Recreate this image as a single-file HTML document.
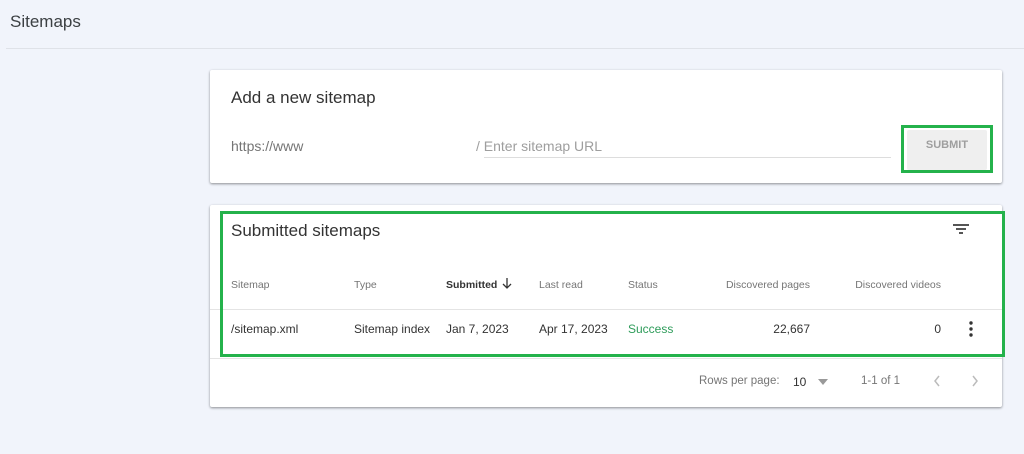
<!DOCTYPE html>
<html><head><meta charset="utf-8"><style>
*{margin:0;padding:0;box-sizing:border-box}
body{width:1024px;height:454px;background:#f1f4fb;font-family:"Liberation Sans",Arial,sans-serif;position:relative;overflow:hidden;color:#202124}
.a{position:absolute;white-space:nowrap}
.card{position:absolute;background:#fff;box-shadow:0 1px 2px rgba(0,0,0,.3),0 1px 3px rgba(0,0,0,.15);border-radius:2px}
.h{font-size:10.5px;color:#757575;top:279px}
.r{font-size:12px;color:#333;top:322px}
.g{position:absolute;border:3px solid #24b24b}
</style></head><body>
<div class="a" style="left:10px;top:12px;font-size:17px;color:#3c4043">Sitemaps</div>
<div class="a" style="left:6px;top:48px;width:1018px;height:1px;background:#dfe2e8"></div>

<div class="card" style="left:210px;top:70px;width:792px;height:113px"></div>
<div class="a" style="left:231px;top:88px;font-size:17px;color:#333">Add a new sitemap</div>
<div class="a" style="left:231px;top:138px;font-size:14px;color:#757575">https://www</div>
<div class="a" style="left:476px;top:138px;font-size:14px;color:#9e9e9e">/ Enter sitemap URL</div>
<div class="a" style="left:484px;top:157px;width:407px;height:1px;background:#ddd"></div>
<div class="a" style="left:907px;top:130px;width:80px;height:40px;background:#efefef;border-radius:2px"></div>
<div class="a" style="left:907px;top:139px;width:80px;text-align:center;font-size:11px;font-weight:bold;color:#9e9e9e">SUBMIT</div>
<div class="g" style="left:901px;top:125px;width:92px;height:48px"></div>

<div class="card" style="left:210px;top:205px;width:792px;height:202px"></div>
<div class="a" style="left:231px;top:221px;font-size:17px;color:#333">Submitted sitemaps</div>
<svg class="a" style="left:951px;top:222px" width="20" height="14"><path d="M2 3h16M5 7h10M8 11h4" stroke="#555" stroke-width="2"/></svg>
<div class="a h" style="left:231px">Sitemap</div>
<div class="a h" style="left:354px">Type</div>
<div class="a h" style="left:446px;color:#333;font-weight:bold">Submitted</div>
<svg class="a" style="left:501px;top:277px" width="12" height="13"><path d="M6 1v10M2 7l4 4 4-4" stroke="#333" stroke-width="1.3" fill="none"/></svg>
<div class="a h" style="left:539px">Last read</div>
<div class="a h" style="left:628px">Status</div>
<div class="a h" style="right:214px">Discovered pages</div>
<div class="a h" style="right:83px">Discovered videos</div>
<div class="a" style="left:210px;top:309px;width:792px;height:1px;background:#e4e4e4"></div>
<div class="a r" style="left:231px">/sitemap.xml</div>
<div class="a r" style="left:354px">Sitemap index</div>
<div class="a r" style="left:446px">Jan 7, 2023</div>
<div class="a r" style="left:539px">Apr 17, 2023</div>
<div class="a r" style="left:628px;color:#2e9c5a">Success</div>
<div class="a r" style="right:214px">22,667</div>
<div class="a r" style="right:83px">0</div>
<svg class="a" style="left:968px;top:321px" width="6" height="16"><circle cx="3" cy="2" r="1.7" fill="#333"/><circle cx="3" cy="8" r="1.7" fill="#333"/><circle cx="3" cy="14" r="1.7" fill="#333"/></svg>
<div class="a" style="left:210px;top:358px;width:792px;height:1px;background:#e4e4e4"></div>
<div class="g" style="left:220px;top:211px;width:785px;height:146px"></div>
<div class="a" style="left:699px;top:375px;font-size:11.5px;color:#757575">Rows per page:</div>
<div class="a" style="left:793px;top:375px;font-size:12px;color:#333">10</div>
<svg class="a" style="left:818px;top:379px" width="10" height="6"><path d="M0 0h10L5 6z" fill="#999"/></svg>
<div class="a" style="left:861px;top:375px;font-size:11.5px;color:#757575">1-1 of 1</div>
<svg class="a" style="left:932px;top:374px" width="10" height="14"><path d="M7 2L3 7l4 5" stroke="#bbb" stroke-width="1.5" fill="none"/></svg>
<svg class="a" style="left:970px;top:374px" width="10" height="14"><path d="M3 2l4 5-4 5" stroke="#bbb" stroke-width="1.5" fill="none"/></svg>
</body></html>
